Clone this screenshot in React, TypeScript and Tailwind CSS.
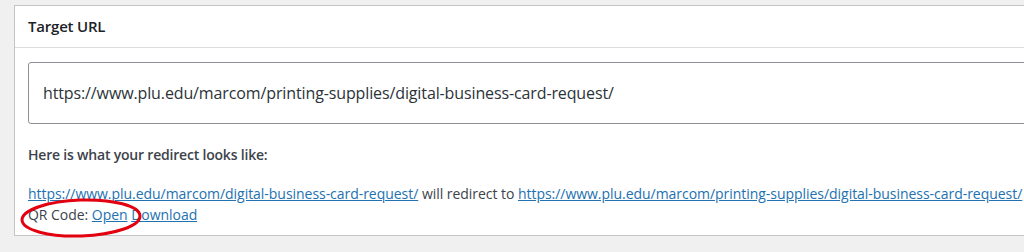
const App = () => {
  return (
    <div className="w-[1024px] h-[252px] overflow-hidden bg-[#f0f0f1] pt-[5px] pl-[14px] font-['Open_Sans',sans-serif] text-[#3c434a]">
      <div className="w-[1060px] bg-white border border-[#c3c4c7] relative">
        <div className="h-[42px] flex items-center px-[13px] border-b border-[#dcdcde]">
          <h2 className="text-[15px] font-semibold text-[#1d2327] tracking-[-0.2px]">Target URL</h2>
        </div>

        <div className="px-[13px] pt-[14px] pb-[10px]">
          <div className="h-[62px] border border-[#8c8f94] rounded-[3px] flex items-center pl-[14px] text-[16px] text-[#2c3338] tracking-[-0.12px]">
            https://www.plu.edu/marcom/printing-supplies/digital-business-card-request/
          </div>

          <p className="mt-[20px] text-[14px] font-semibold tracking-[-0.2px]">Here is what your redirect looks like:</p>

          <div className="mt-[18px] text-[14px] leading-[21px] tracking-[-0.04px] whitespace-nowrap">
            <div>
              <a className="text-[#2271b1] underline">https://www.plu.edu/marcom/digital-business-card-request/</a>
              {" "}will redirect to{" "}
              <a className="text-[#2271b1] underline">https://www.plu.edu/marcom/printing-supplies/digital-business-card-request/</a>
            </div>
            <div>
              QR Code: <a className="text-[#2271b1] underline">Open</a>{" "}
              <a className="text-[#2271b1] underline">Download</a>
            </div>
          </div>
        </div>

        {/* red annotation circle */}
        <svg className="absolute left-[3px] top-[190px]" width="128" height="44" viewBox="0 0 128 44">
          <ellipse cx="63" cy="22" rx="59" ry="18" fill="none" stroke="#e3000f" strokeWidth="3" transform="rotate(-2 63 22)" />
        </svg>
      </div>
    </div>
  );
};

export default App;
